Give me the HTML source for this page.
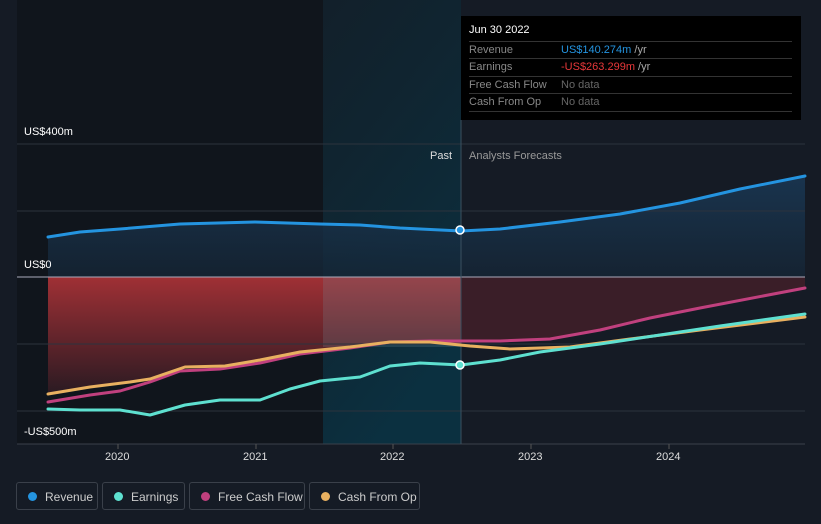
<!DOCTYPE html>
<html><head><meta charset="utf-8"><style>
body{margin:0;width:821px;height:524px;background:#151b25;font-family:"Liberation Sans",sans-serif;overflow:hidden;position:relative}
.t{position:absolute;font-size:11px;color:#fff}
.tip{position:absolute;left:461px;top:16px;width:340px;height:104px;background:#000;font-size:11px}
.tip .r{position:absolute;left:8px;width:323px;border-top:1px solid #333;height:17px;line-height:17px;color:#888}
.leg{position:absolute;top:482px;height:28px;border:1px solid #3a404a;border-radius:3px;font-size:12px;color:#ccc;line-height:28px;box-sizing:border-box;padding-left:28px}
.leg i{position:absolute;left:11px;top:9px;width:9px;height:9px;border-radius:50%}
</style></head><body>
<svg width="821" height="524" style="position:absolute;left:0;top:0">
<defs>
<linearGradient id="hl" x1="0" y1="0" x2="0.4" y2="1"><stop offset="0" stop-color="#0f2530" stop-opacity=".5"/><stop offset="1" stop-color="#0b3040"/></linearGradient>
<linearGradient id="red" x1="0" y1="0" x2="0" y2="1"><stop offset="0" stop-color="#a03035"/><stop offset="1" stop-color="#2a1a22"/></linearGradient>
<linearGradient id="blu" x1="0" y1="0" x2="0" y2="1"><stop offset="0" stop-color="#1a3a58"/><stop offset="1" stop-color="#152535"/></linearGradient>
</defs>
<rect x="17" y="0" width="306" height="444" fill="#10151c"/>
<rect x="323" y="0" width="138" height="444" fill="url(#hl)"/>
<path d="M48,237 L80,232 120,229 180,224 255,222 320,224 360,225 400,228 461,231 500,229 560,222 620,214 680,203 740,189 805,176 L805,277 L48,277Z" fill="url(#blu)" opacity=".8"/>
<path d="M48,277 L461,277 461,346 430,342 390,342 350,347 300,352 260,360 225,366 185,367 150,379 130,382 90,387 48,394Z" fill="url(#red)"/>
<path d="M461,277 L805,277 805,288 700,308 650,318 600,330 550,339 500,341 461,341Z" fill="#4a1f2a" opacity=".7"/>
<rect x="323" y="277" width="138" height="70" fill="#7090a0" opacity=".22"/>
<g stroke="#2c333d" stroke-width="1">
<line x1="17" y1="144" x2="805" y2="144"/><line x1="17" y1="211" x2="805" y2="211"/><line x1="17" y1="344" x2="805" y2="344"/><line x1="17" y1="411" x2="805" y2="411"/>
</g>
<line x1="17" y1="277" x2="805" y2="277" stroke="#aab" stroke-width="1"/>
<line x1="17" y1="444" x2="805" y2="444" stroke="#3a404a"/>
<line x1="461" y1="120" x2="461" y2="444" stroke="#3a5060"/>
<g fill="none" stroke-width="3" stroke-linejoin="round" stroke-linecap="round">
<polyline stroke="#2494e0" points="48,237 80,232 120,229 180,224 255,222 320,224 360,225 400,228 461,231 500,229 560,222 620,214 680,203 740,189 805,176"/>
<polyline stroke="#c0407e" points="48,402 90,395 120,391 150,382 180,371 220,369 260,363 300,354 350,348 390,342 430,341 500,341 550,339 600,330 650,318 700,308 805,288"/>
<polyline stroke="#e8b060" points="48,394 90,387 130,382 150,379 185,367 225,366 260,360 300,352 350,347 390,342 430,342 470,346 510,349 570,347 630,339 700,330 805,317"/>
<polyline stroke="#5ee0d0" points="48,409 80,410 120,410 150,415 185,405 220,400 260,400 290,389 320,381 360,377 390,366 420,363 461,365 500,360 540,352 600,344 660,335 720,326 805,314"/>
</g>
<circle cx="460" cy="230" r="4" fill="#2494e0" stroke="#fff" stroke-width="1.5"/>
<circle cx="460" cy="365" r="4" fill="#5ee0d0" stroke="#fff" stroke-width="1.5"/>
<g stroke="#555"><line x1="118" y1="444" x2="118" y2="449"/><line x1="256" y1="444" x2="256" y2="449"/><line x1="393" y1="444" x2="393" y2="449"/><line x1="531" y1="444" x2="531" y2="449"/><line x1="669" y1="444" x2="669" y2="449"/></g>
</svg>
<div class="t" style="left:24px;top:126px">US$400m</div>
<div class="t" style="left:24px;top:259px">US$0</div>
<div class="t" style="left:24px;top:426px">-US$500m</div>
<div class="t" style="left:430px;top:150px;color:#ddd">Past</div>
<div class="t" style="left:469px;top:150px;color:#999">Analysts Forecasts</div>
<div class="t" style="left:105px;top:451px;color:#ddd">2020</div>
<div class="t" style="left:243px;top:451px;color:#ddd">2021</div>
<div class="t" style="left:380px;top:451px;color:#ddd">2022</div>
<div class="t" style="left:518px;top:451px;color:#ddd">2023</div>
<div class="t" style="left:656px;top:451px;color:#ddd">2024</div>
<div class="tip">
<div style="position:absolute;left:8px;top:8px;color:#fff">Jun 30 2022</div>
<div class="r" style="top:25px">Revenue<span style="position:absolute;left:92px;color:#2494e0">US$140.274m <span style="color:#aaa">/yr</span></span></div>
<div class="r" style="top:42px">Earnings<span style="position:absolute;left:92px;color:#e8383a">-US$263.299m <span style="color:#aaa">/yr</span></span></div>
<div class="r" style="top:60px">Free Cash Flow<span style="position:absolute;left:92px;color:#666">No data</span></div>
<div class="r" style="top:77px">Cash From Op<span style="position:absolute;left:92px;color:#666">No data</span></div>
<div class="r" style="top:95px;height:0"></div>
</div>
<div class="leg" style="left:16px;width:82px"><i style="background:#2494e0"></i>Revenue</div>
<div class="leg" style="left:102px;width:83px"><i style="background:#5ee0d0"></i>Earnings</div>
<div class="leg" style="left:189px;width:116px"><i style="background:#c0407e"></i>Free Cash Flow</div>
<div class="leg" style="left:309px;width:111px"><i style="background:#e8b060"></i>Cash From Op</div>
</body></html>
